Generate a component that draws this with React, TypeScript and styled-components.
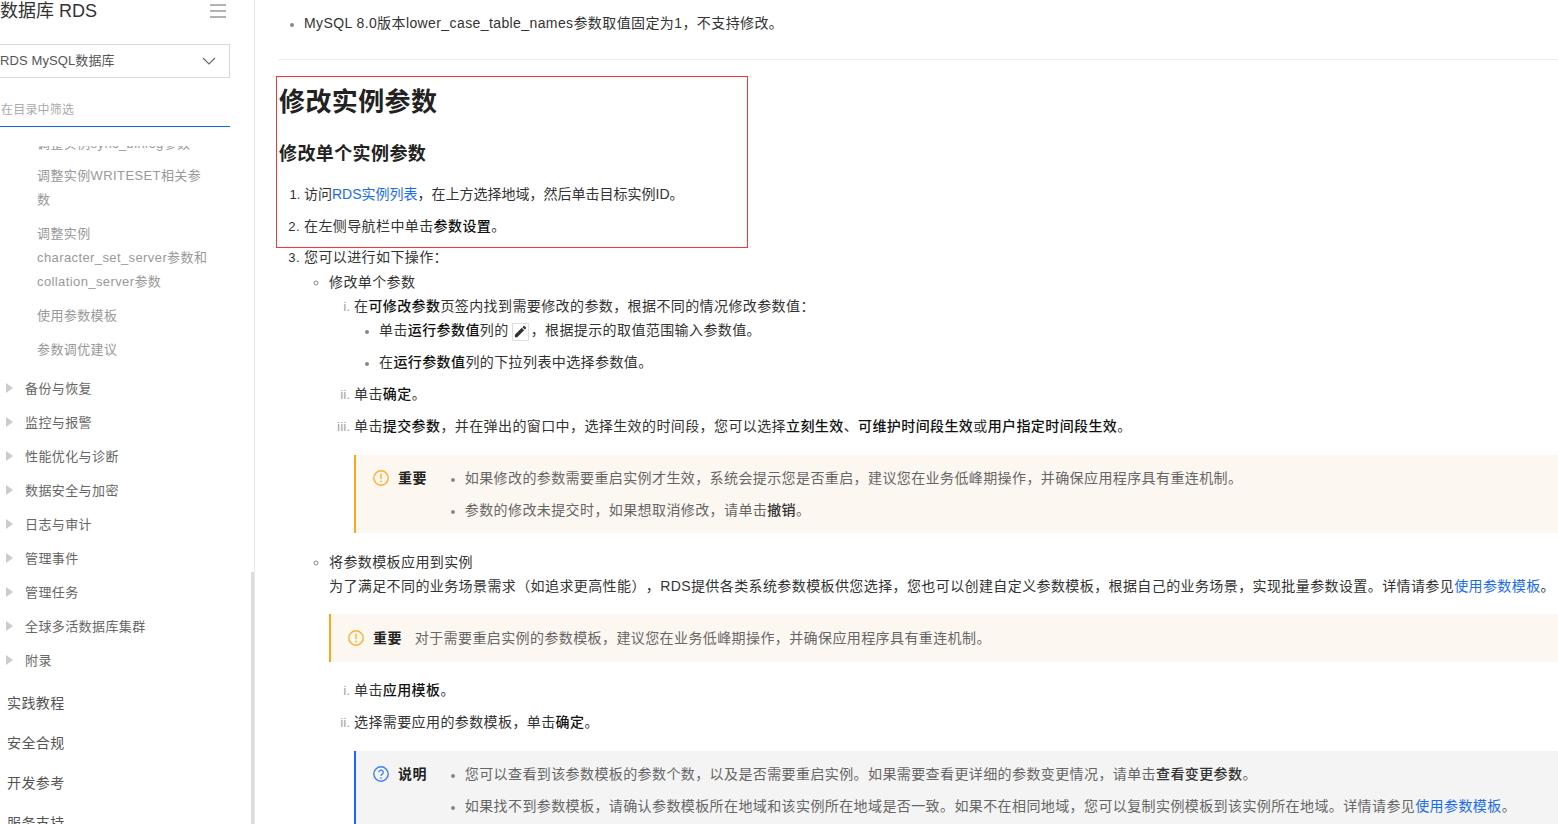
import { ReactElement } from "react";
import styled, { createGlobalStyle } from "styled-components";

const GlobalStyle = createGlobalStyle`
  html, body {
    margin: 0;
    padding: 0;
    height: 100%;
    overflow: hidden;
    background: #fff;
  }
  body {
    font-family: "Liberation Sans", "Noto Sans CJK SC", sans-serif;
    font-size: 14px;
    letter-spacing: 0.4px;
    text-spacing-trim: space-all;
    color: #333;
  }
`;

const subItems = [
  ["调整实例WRITESET相关参", "数"],
  ["调整实例", "character_set_server参数和", "collation_server参数"],
  ["使用参数模板"],
  ["参数调优建议"],
];

const groups = [
  "备份与恢复",
  "监控与报警",
  "性能优化与诊断",
  "数据安全与加密",
  "日志与审计",
  "管理事件",
  "管理任务",
  "全球多活数据库集群",
  "附录",
];

const topLevel = ["实践教程", "安全合规", "开发参考", "服务支持"];

function WarnIcon(): ReactElement {
  return (
    <NoteIcon viewBox="0 0 16 16">
      <circle cx="8" cy="8" r="7.2" fill="none" stroke="#ffb02e" strokeWidth="1.4" />
      <path d="M8 3.8v5.4" stroke="#ffb02e" strokeWidth="1.4" />
      <circle cx="8" cy="11.4" r="0.9" fill="#ffb02e" />
    </NoteIcon>
  );
}

function HelpIcon(): ReactElement {
  return (
    <NoteIcon viewBox="0 0 16 16">
      <circle cx="8" cy="8" r="7.2" fill="none" stroke="#3d7ff5" strokeWidth="1.4" />
      <path
        d="M5.8 6.3a2.2 2.2 0 1 1 3.4 1.9c-.8.5-1.2.9-1.2 1.8"
        fill="none"
        stroke="#3d7ff5"
        strokeWidth="1.3"
      />
      <circle cx="8" cy="12" r="0.85" fill="#3d7ff5" />
    </NoteIcon>
  );
}

function App(): ReactElement {
  return (
    <Viewport>
      <GlobalStyle />
      <Sidebar>
        <TitleRow>
          <ProductTitle>云数据库 RDS</ProductTitle>
          <svg width="18" height="16" viewBox="0 0 18 16">
            <path d="M1 2h16M1 8h16M1 14h16" stroke="#999" strokeWidth="1.4" />
          </svg>
        </TitleRow>
        <Select>
          <SelectText>RDS MySQL数据库</SelectText>
          <svg width="14" height="8" viewBox="0 0 14 8">
            <path d="M1 1l6 6 6-6" fill="none" stroke="#666" strokeWidth="1.1" />
          </svg>
        </Select>
        <Filter>在目录中筛选</Filter>
        <Tree>
          <SubItem $first>
            <SubLine>调整实例sync_binlog参数</SubLine>
          </SubItem>
          {subItems.map((lines) => (
            <SubItem key={lines[0]}>
              {lines.map((line) => (
                <SubLine key={line}>{line}</SubLine>
              ))}
            </SubItem>
          ))}
          <GroupList>
            {groups.map((g) => (
              <GroupItem key={g}>
                <svg width="7" height="10" viewBox="0 0 7 10">
                  <path d="M0 0l7 5-7 5z" fill="#ccc" />
                </svg>
                {g}
              </GroupItem>
            ))}
          </GroupList>
          <TopList>
            {topLevel.map((t) => (
              <TopItem key={t}>{t}</TopItem>
            ))}
          </TopList>
        </Tree>
        <ScrollThumb />
      </Sidebar>

      <Main>
        <DiscList>
          <li>MySQL 8.0版本lower_case_table_names参数取值固定为1，不支持修改。</li>
        </DiscList>
        <Rule />
        <Article>
          <Highlight />
          <H2>修改实例参数</H2>
          <H3>修改单个实例参数</H3>
          <Steps>
            <FirstStep>
              访问<Link>RDS实例列表</Link>，在上方选择地域，然后单击目标实例ID。
            </FirstStep>
            <li>
              在左侧导航栏中单击<b>参数设置</b>。
            </li>
            <LastStep>
              您可以进行如下操作：
              <CircleList>
                <li>
                  修改单个参数
                  <RomanList>
                    <li>
                      在<b>可修改参数</b>页签内找到需要修改的参数，根据不同的情况修改参数值：
                      <DiscList>
                        <li>
                          单击<b>运行参数值</b>列的
                          <PenButton>
                            <svg width="15" height="15" viewBox="0 0 24 24">
                              <path
                                fill="#333"
                                d="M3 17.25V21h3.75L17.81 9.94l-3.75-3.75L3 17.25zM20.71 7.04a1 1 0 0 0 0-1.41l-2.34-2.34a1 1 0 0 0-1.41 0l-1.83 1.83 3.75 3.75 1.83-1.83z"
                              />
                            </svg>
                          </PenButton>
                          ，根据提示的取值范围输入参数值。
                        </li>
                        <SpacedItem>
                          在<b>运行参数值</b>列的下拉列表中选择参数值。
                        </SpacedItem>
                      </DiscList>
                    </li>
                    <SpacedItem>
                      单击<b>确定</b>。
                    </SpacedItem>
                    <SpacedItem>
                      单击<b>提交参数</b>，并在弹出的窗口中，选择生效的时间段，您可以选择
                      <b>立刻生效</b>、<b>可维护时间段生效</b>或<b>用户指定时间段生效</b>。
                    </SpacedItem>
                  </RomanList>
                  <Note $tone="warn">
                    <WarnIcon />
                    <NoteLabel>重要</NoteLabel>
                    <NoteList>
                      <li>
                        如果修改的参数需要重启实例才生效，系统会提示您是否重启，建议您在业务低峰期操作，并确保应用程序具有重连机制。
                      </li>
                      <li>
                        参数的修改未提交时，如果想取消修改，请单击<NoteBold>撤销</NoteBold>。
                      </li>
                    </NoteList>
                  </Note>
                </li>
                <TemplateItem>
                  将参数模板应用到实例
                  <Paragraph>
                    为了满足不同的业务场景需求（如追求更高性能），RDS提供各类系统参数模板供您选择，您也可以创建自定义参数模板，根据自己的业务场景，实现批量参数设置。详情请参见
                    <Link>使用参数模板</Link>。
                  </Paragraph>
                  <InlineNote $tone="warn">
                    <WarnIcon />
                    <NoteLabel>重要</NoteLabel>
                    <InlineNoteText>
                      对于需要重启实例的参数模板，建议您在业务低峰期操作，并确保应用程序具有重连机制。
                    </InlineNoteText>
                  </InlineNote>
                  <RomanList $gap>
                    <li>
                      单击<b>应用模板</b>。
                    </li>
                    <SpacedItem>
                      选择需要应用的参数模板，单击<b>确定</b>。
                    </SpacedItem>
                  </RomanList>
                  <Note $tone="info">
                    <HelpIcon />
                    <NoteLabel>说明</NoteLabel>
                    <NoteList>
                      <li>
                        您可以查看到该参数模板的参数个数，以及是否需要重启实例。如果需要查看更详细的参数变更情况，请单击
                        <NoteBold>查看变更参数</NoteBold>。
                      </li>
                      <li>
                        如果找不到参数模板，请确认参数模板所在地域和该实例所在地域是否一致。如果不在相同地域，您可以复制实例模板到该实例所在地域。详情请参见
                        <Link>使用参数模板</Link>。
                      </li>
                    </NoteList>
                  </Note>
                </TemplateItem>
              </CircleList>
            </LastStep>
          </Steps>
        </Article>
      </Main>
    </Viewport>
  );
}

const Viewport = styled.div`
  display: flex;
  width: 1640px;
  height: 824px;
  margin-left: -24px;
  overflow: hidden;
`;

const Sidebar = styled.aside`
  position: relative;
  flex: none;
  box-sizing: border-box;
  width: 279px;
  height: 824px;
  padding: 0 24px 0 16px;
  border-right: 1px solid #e8e8e8;
  overflow: hidden;
`;

const TitleRow = styled.div`
  display: flex;
  align-items: center;
  justify-content: space-between;
  height: 22px;
  margin-left: -10px;
  padding-right: 3px;
`;

const ProductTitle = styled.div`
  margin-top: -4px;
  font-size: 18px;
  letter-spacing: 0;
  color: #333;
`;

const Select = styled.div`
  display: flex;
  align-items: center;
  justify-content: space-between;
  box-sizing: border-box;
  height: 34px;
  margin-top: 22px;
  padding: 0 13px 0 7px;
  border: 1px solid #d9d9d9;
`;

const SelectText = styled.span`
  margin-top: -4px;
  font-size: 13px;
  letter-spacing: 0.1px;
  color: #555;
`;

const Filter = styled.div`
  box-sizing: border-box;
  height: 49px;
  padding: 23px 0 0 9px;
  line-height: 18px;
  border-bottom: 1px solid #0a6cf0;
  font-size: 12px;
  letter-spacing: 0.2px;
  color: #aaa;
`;

const Tree = styled.div`
  height: 678px;
  margin: 19px -24px 0 -16px;
  overflow: hidden;
`;

const SubItem = styled.div<{ $first?: boolean }>`
  margin: ${(p) => (p.$first ? "-14px 0 8px 61px" : "0 0 10px 61px")};
  font-size: 13px;
  color: #999;
`;

const SubLine = styled.span`
  display: block;
  height: 24px;
  line-height: 24px;
  white-space: nowrap;
`;

const GroupList = styled.div`
  display: flex;
  flex-direction: column;
  gap: 10px;
  margin-top: 13px;
`;

const GroupItem = styled.div`
  display: flex;
  align-items: center;
  gap: 12px;
  height: 24px;
  padding-left: 30px;
  font-size: 13px;
  color: #666;

  svg {
    margin-top: 2px;
  }
`;

const TopList = styled.div`
  display: flex;
  flex-direction: column;
  gap: 16px;
  margin-top: 20px;
`;

const TopItem = styled.div`
  height: 24px;
  line-height: 24px;
  padding-left: 31px;
  font-size: 14px;
  color: #555;
`;

const ScrollThumb = styled.div`
  position: absolute;
  top: 572px;
  right: 0;
  bottom: 0;
  width: 3px;
  background: #ddd;
`;

const Main = styled.main`
  flex: 1;
  min-width: 0;
  padding: 11px 0 0 24px;
  line-height: 24px;
  color: #333;

  b {
    font-weight: 500;
    color: #111;
  }
`;

const DiscList = styled.ul`
  margin: 0;
  padding-left: 25px;
  list-style: disc;

  li::marker {
    color: #888;
    font-size: 12px;
  }
`;

const Rule = styled.hr`
  height: 1px;
  margin: 24px 0 0 -1px;
  border: 0;
  background: #eee;
`;

const Article = styled.article`
  position: relative;
`;

const Highlight = styled.div`
  position: absolute;
  top: 16px;
  left: -3px;
  box-sizing: border-box;
  width: 472px;
  height: 172px;
  border: 1px solid #f33;
  pointer-events: none;
`;

const H2 = styled.h2`
  margin: 0;
  padding-top: 24px;
  font-size: 26px;
  line-height: 36px;
  font-weight: 700;
  color: #222;
`;

const H3 = styled.h3`
  margin: 22px 0 0;
  font-size: 18px;
  line-height: 24px;
  font-weight: 700;
  color: #222;
`;

const Steps = styled.ol`
  margin: 16px 0 0;
  padding-left: 25px;
  list-style: decimal;

  > li::marker {
    font-size: 13px;
  }

  > li + li {
    margin-top: 8px;
  }
`;

const FirstStep = styled.li`
  letter-spacing: 0;
`;

const LastStep = styled.li`
  && {
    margin-top: 7px;
  }
`;

const CircleList = styled.ul`
  margin: 1px 0 0;
  padding-left: 25px;
  list-style: circle;

  > li::marker {
    color: #888;
  }
`;

const RomanList = styled.ol<{ $gap?: boolean }>`
  margin: ${(p) => (p.$gap ? "16px 0 0" : "0")};
  padding-left: 25px;
  list-style: lower-roman;

  > li::marker {
    color: #999;
    font-size: 12px;
  }
`;

const SpacedItem = styled.li`
  margin-top: 8px;
`;

const TemplateItem = styled.li`
  margin-top: 17px;
`;

const PenButton = styled.span`
  display: inline-flex;
  align-items: center;
  justify-content: center;
  box-sizing: border-box;
  width: 17px;
  height: 18px;
  margin: 0 2px 0 3px;
  border: 1px solid #ddd;
  vertical-align: -4px;
`;

const Paragraph = styled.div`
  white-space: nowrap;
`;

const Link = styled.a`
  color: #1a6cf0;
`;

const Note = styled.div<{ $tone: "warn" | "info" }>`
  display: flex;
  align-items: flex-start;
  margin: 17px 0 0 25px;
  padding: 11px 0 11px 17px;
  border-left: 2px solid ${(p) => (p.$tone === "warn" ? "#ffa71a" : "#1a66ff")};
  background: ${(p) => (p.$tone === "warn" ? "#fdf7f1" : "#f4f4f4")};
  color: #666;
`;

const InlineNote = styled(Note)`
  margin: 16px 0 0;
  padding: 12px 0 12px 17px;
`;

const NoteIcon = styled.svg`
  flex: none;
  width: 16px;
  height: 16px;
  margin-top: 4px;
`;

const NoteLabel = styled.span`
  flex: none;
  margin-left: 9px;
  font-weight: 700;
  color: #222;
`;

const NoteList = styled.ul`
  margin: 0 0 0 38px;
  padding: 0;
  list-style: disc;

  li + li {
    margin-top: 8px;
  }

  li::marker {
    color: #888;
    font-size: 12px;
  }
`;

const NoteBold = styled.span`
  font-weight: 500;
  color: #333;
`;

const InlineNoteText = styled.span`
  margin-left: 13px;
`;

export default App;
